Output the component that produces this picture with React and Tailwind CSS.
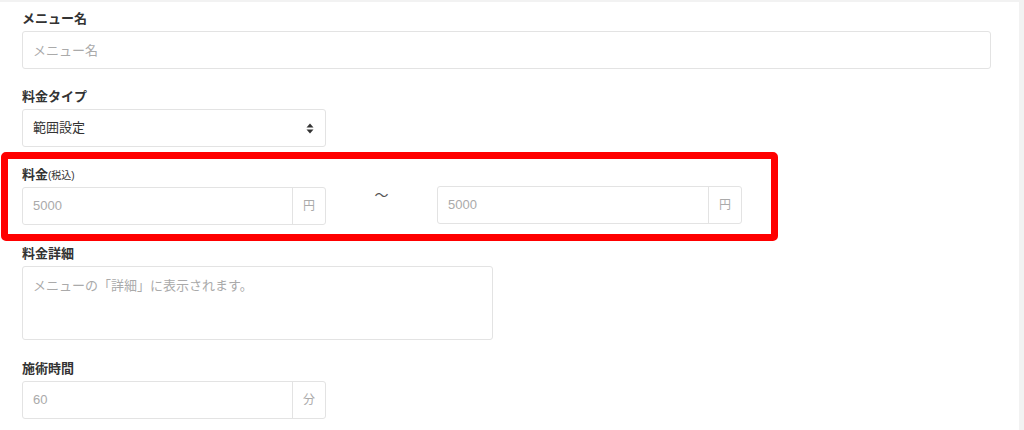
import React from 'react';

const font = { fontFamily: '"Liberation Sans", "Noto Sans CJK JP", sans-serif' };

const Label = ({ children }) => (
  <div className="h-[18px] mb-[3px] text-[13px] leading-[18px] font-bold text-[#333]">{children}</div>
);

const AddonInput = ({ placeholder, unit, className = '' }) => (
  <div className={`flex h-[38px] border border-[#e3e3e3] rounded-[3px] bg-white ${className}`}>
    <input
      className="flex-1 min-w-0 px-[10px] text-[13px] text-[#333] placeholder:text-[#aaa] outline-none bg-transparent"
      placeholder={placeholder}
    />
    <div className="w-[33px] border-l border-[#e3e3e3] flex items-center justify-center text-[12px] text-[#aaa]">
      {unit}
    </div>
  </div>
);

const App = () => {
  return (
    <div className="w-[1024px] h-[430px] bg-white flex overflow-hidden" style={font}>
      <div className="relative flex-1 border-t-2 border-[#f2f2f2]">
        <div className="pl-[22px] pt-[8px]">
          {/* メニュー名 */}
          <div className="mb-[19px]">
            <Label>メニュー名</Label>
            <input
              className="w-[969px] h-[38px] border border-[#e3e3e3] rounded-[3px] px-[10px] text-[13px] placeholder:text-[#aaa] outline-none"
              placeholder="メニュー名"
            />
          </div>

          {/* 料金タイプ */}
          <div className="mb-[19px]">
            <Label>料金タイプ</Label>
            <div className="w-[304px] h-[38px] border border-[#e3e3e3] rounded-[3px] px-[10px] flex items-center justify-between">
              <span className="text-[13px] text-[#333]">範囲設定</span>
              <svg width="8" height="11" viewBox="0 0 8 11" className="mr-[1px]">
                <path d="M4 0.5 L7.5 4.5 H0.5 Z" fill="#333" />
                <path d="M4 10.5 L7.5 6.5 H0.5 Z" fill="#333" />
              </svg>
            </div>
          </div>

          {/* 料金 */}
          <div className="mb-[20px]">
            <div className="h-[18px] mb-[3px] text-[13px] leading-[18px] font-bold text-[#333]">
              料金<span className="text-[10px] font-normal">(税込)</span>
            </div>
            <div className="flex items-start">
              <AddonInput placeholder="5000" unit="円" className="w-[304px]" />
              <div className="w-[111px] text-center text-[14px] leading-[14px] text-[#555] pt-[1px]">〜</div>
              <AddonInput placeholder="5000" unit="円" className="w-[305px] -mt-[1px]" />
            </div>
          </div>

          {/* 料金詳細 */}
          <div className="mb-[20px]">
            <Label>料金詳細</Label>
            <textarea
              className="block w-[471px] h-[74px] border border-[#e3e3e3] rounded-[3px] px-[10px] py-[9px] text-[13px] placeholder:text-[#aaa] outline-none resize-none"
              placeholder="メニューの「詳細」に表示されます。"
            />
          </div>

          {/* 施術時間 */}
          <div>
            <Label>施術時間</Label>
            <AddonInput placeholder="60" unit="分" className="w-[304px]" />
          </div>
        </div>

        {/* annotation */}
        <div className="absolute left-[1px] top-[150px] w-[777px] h-[89px] border-[7px] border-[#ff0000] rounded-[5px] pointer-events-none" />
      </div>
      <div className="w-[5px] bg-[#f2f2f2]" />
    </div>
  );
};

export default App;
